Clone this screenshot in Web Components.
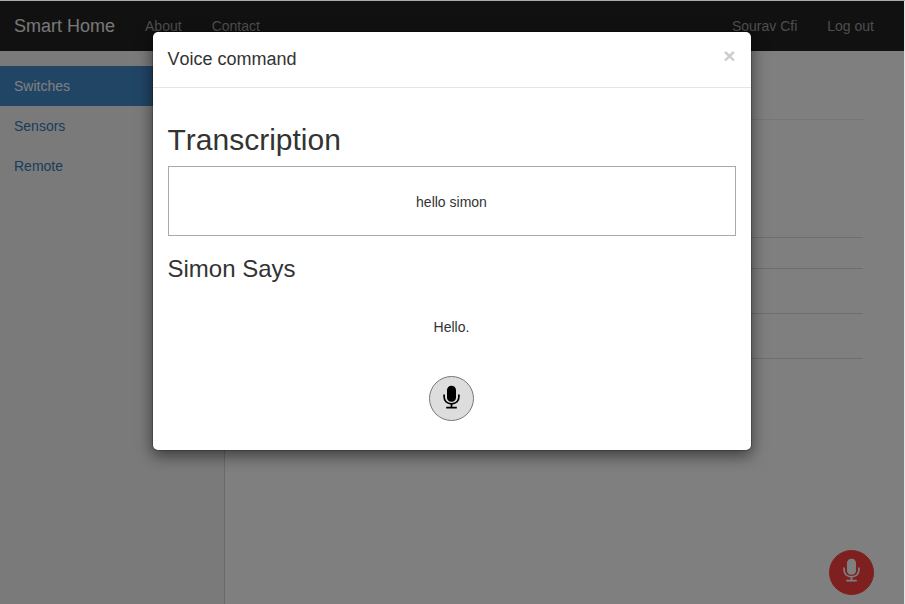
<!DOCTYPE html>
<html lang="en">
<head>
<meta charset="utf-8">
<title>Smart Home</title>
<style>
html,body{margin:0;height:100%;overflow:hidden}
body{background:#e6e6e6;font:14px/20px "Liberation Sans",Arial,sans-serif;font-kerning:none;color:#333}
</style>
</head>
<body>
<home-app></home-app>
<script>
const define = (name, html) => customElements.define(name, class extends HTMLElement {
  constructor() {
    super();
    this.attachShadow({ mode: "open" }).innerHTML = html;
  }
});

define("mic-icon", `<style>:host{display:block;width:17px;height:24px}svg{display:block}</style>
<svg width="17" height="24" viewBox="0 0 17 24" fill="none" stroke="currentColor">
<rect x="4" y="0.7" width="9" height="16" rx="4.3" fill="currentColor" stroke="none"/>
<path d="M1.1 9.6v2.2c0 4.3 3.1 7 7.4 7s7.4-2.7 7.4-7V9.6" stroke-width="1.7"/>
<path d="M8.5 18.8v3.4M3.2 22.7h10.6" stroke-width="1.7"/></svg>`);

define("mic-button", `<style>
:host{display:grid;place-items:center;box-sizing:border-box;width:45px;height:45px;border-radius:50%;background:#ddd;color:#000;border:1px solid #777}
:host([alert]){background:#ff4040;color:#fff;border-color:#ff4040}
mic-icon{margin-bottom:3px}
:host([alert]) mic-icon{margin-bottom:5px}
</style><mic-icon></mic-icon>`);

define("nav-bar", `<style>
:host{display:flex;height:50px;background:#222;color:#9d9d9d;justify-content:space-between;align-items:center;box-sizing:border-box;padding:0 15px 0 14px}
div{display:flex}
.brand{font-size:18px;color:#eee;margin-right:15px}
span{padding:0 15px}.brand{padding:0}
</style><div><span class="brand">Smart Home</span><span>About</span><span>Contact</span></div><div><span>Sourav Cfi</span><span>Log out</span></div>`);

define("side-link", `<style>
:host{display:block;padding:10px 14px;color:#337ab7}
:host([active]){background:#428bca;color:#fff}
</style><slot></slot>`);

define("side-bar", `<style>
:host{display:block;box-sizing:border-box;width:225px;padding-top:15px;background:#f5f5f5;border-right:1px solid #d5d5d5}
</style><side-link active>Switches</side-link><side-link>Sensors</side-link><side-link>Remote</side-link>`);

define("switch-panel", `<style>
:host{display:block;flex:1;padding:0 41px 0 40px}
div{box-sizing:border-box;border-bottom:1px solid #ddd}
.head{height:69px;border-color:#eee;margin-right:-1px}
</style><div class="head"></div><div style="height:118px"></div><div style="height:31px"></div><div style="height:45px"></div><div style="height:45px"></div>`);

define("voice-dialog", `<style>
:host{display:block;box-sizing:border-box;width:600px;height:420px;background:#fff;background-clip:padding-box;border:1px solid rgba(0,0,0,.2);border-radius:6px;box-shadow:0 5px 15px rgba(0,0,0,.5)}
header{display:flex;justify-content:space-between;box-sizing:border-box;height:56px;padding:15px;border-bottom:1px solid #e5e5e5}
h1,h2,h3,p{font-weight:500;margin:0}
h1{font-size:18px;line-height:25px;font-weight:400}
.close{font-size:21px;line-height:21px;font-weight:700;color:#000;opacity:.2;margin-top:-2px}
section{padding:35px 15px 15px}
h2{font-size:30px;line-height:33px;margin-bottom:10px;font-weight:400}
.box{box-sizing:border-box;height:70px;border:1px solid #a9a9a9;display:grid;place-items:center;padding-top:2px}
h3{font-size:24px;line-height:26px;margin-top:20px;font-weight:400}
.reply{height:70px;margin-top:10px;display:grid;place-items:center}
mic-button{margin:14px auto 0}
</style>
<header><h1>Voice command</h1><span class="close">×</span></header>
<section><h2>Transcription</h2><div class="box"><p>hello simon</p></div><h3>Simon Says</h3><div class="reply"><p>Hello.</p></div><mic-button></mic-button></section>`);

define("home-app", `<style>
:host{display:block;box-sizing:border-box;height:100%;border-top:1px solid #a9adad;padding-right:1px}
.page{height:100%;display:flex;flex-direction:column;background:#fff}
main{flex:1;display:flex}
.float{position:absolute;left:829px;top:550px}
.overlay{position:absolute;top:1px;left:0;width:904px;height:603px;background:rgba(0,0,0,.5);display:flex;justify-content:center;align-items:flex-start;padding:30px 1px 0 0;box-sizing:border-box}
</style>
<div class="page"><nav-bar></nav-bar><main><side-bar></side-bar><switch-panel></switch-panel></main></div>
<mic-button alert class="float"></mic-button>
<div class="overlay"><voice-dialog></voice-dialog></div>`);
</script>
</body>
</html>
